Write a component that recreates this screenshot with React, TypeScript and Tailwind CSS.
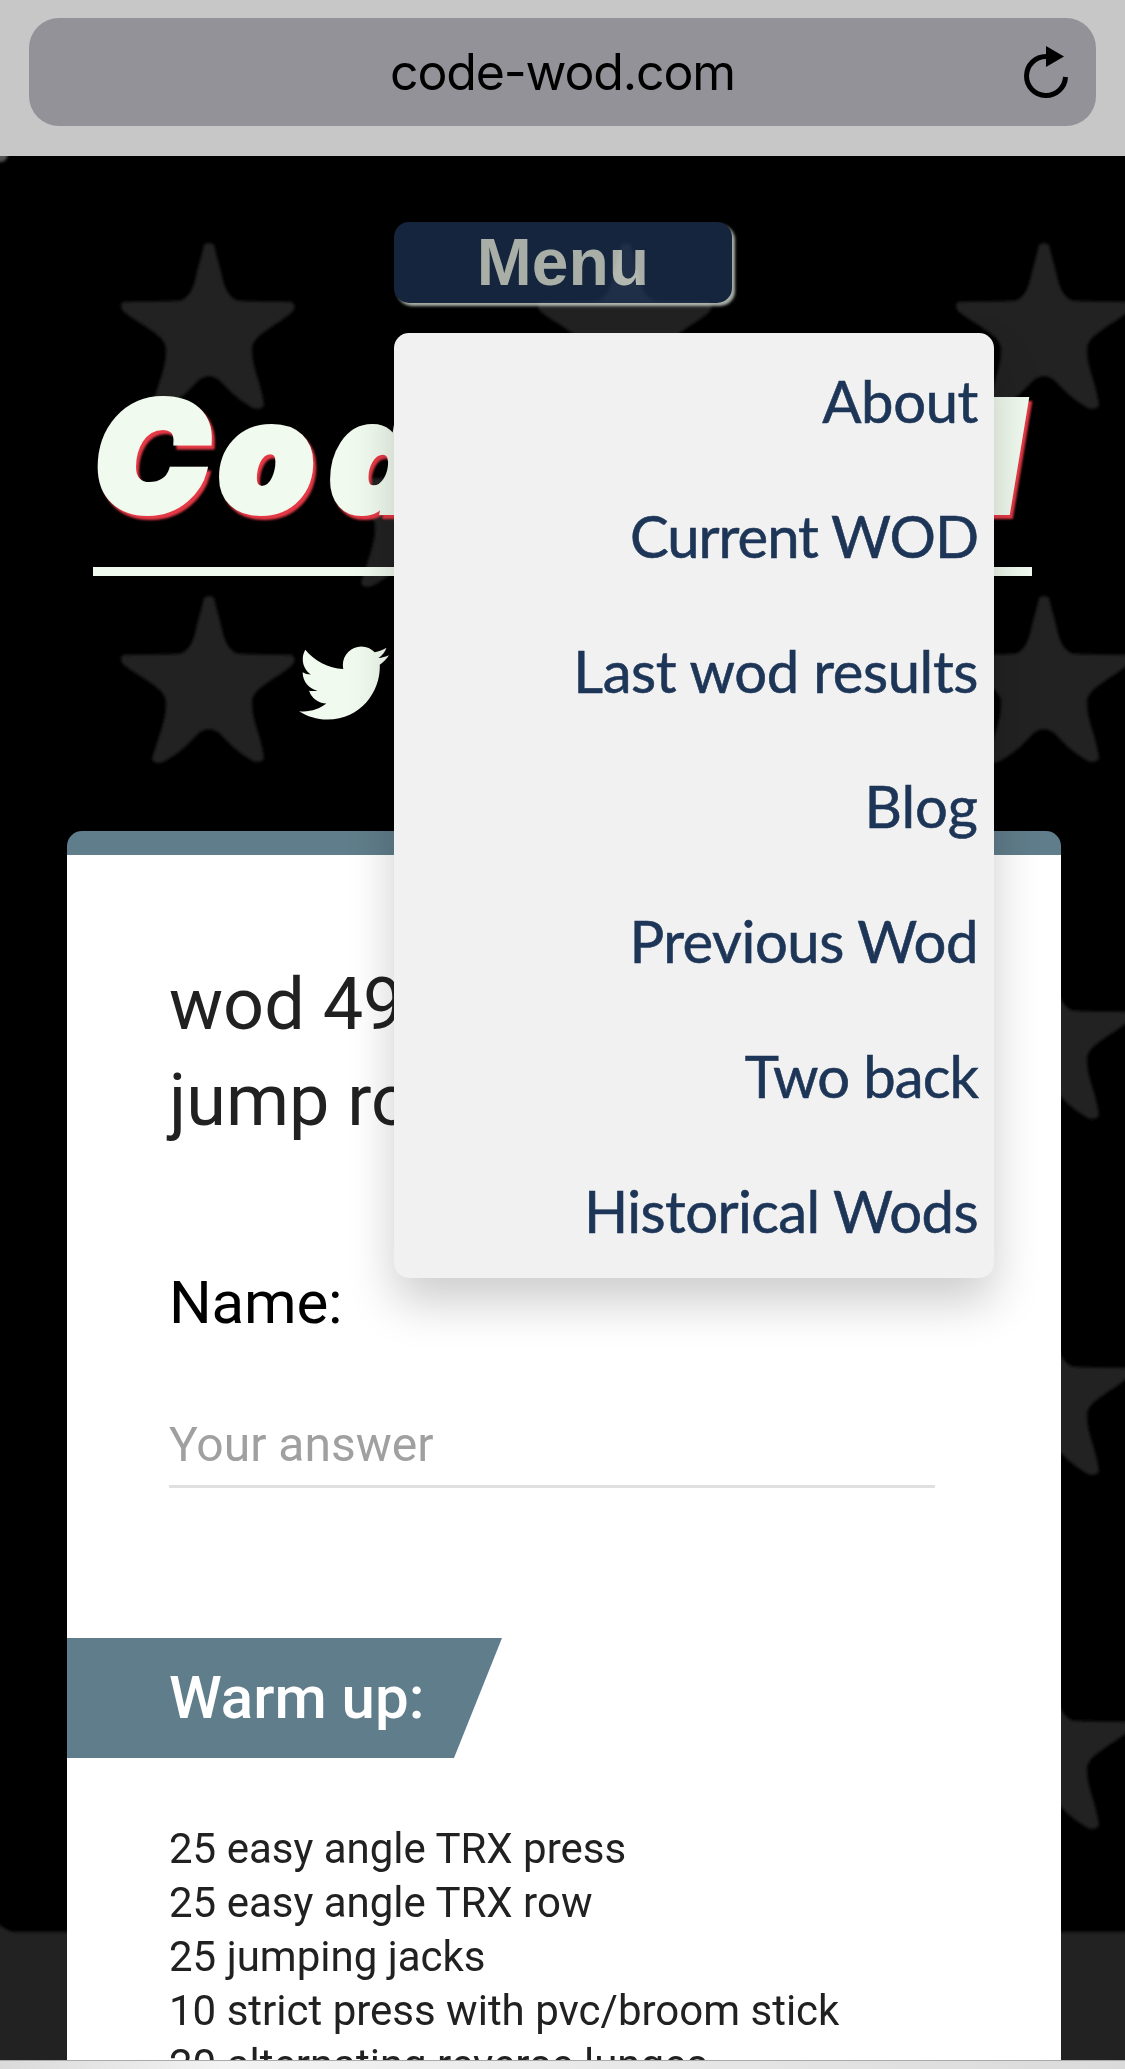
import { FaTwitter } from "react-icons/fa";

const menuItems = [
  { label: "About", tracking: "tracking-[-0.4px]" },
  { label: "Current WOD", tracking: "tracking-[-1px]" },
  { label: "Last wod results", tracking: "tracking-[-0.4px]" },
  { label: "Blog", tracking: "tracking-[0px]" },
  { label: "Previous Wod", tracking: "tracking-[-0.5px]" },
  { label: "Two back", tracking: "tracking-[-0.9px]" },
  { label: "Historical Wods", tracking: "tracking-[-0.6px]" },
];

const warmUp = [
  "25 easy angle TRX press",
  "25 easy angle TRX row",
  "25 jumping jacks",
  "10 strict press with pvc/broom stick",
  "20 alternating reverse lunges",
];

// Tip positions of the flag stars, in page pixels
const stars: [number, number][] = [
  [209, 244], [626, 244], [1044, 244],
  [418, 421], [835, 421],
  [209, 597], [626, 597], [1044, 597],
  [1044, 954],
  [1044, 1310],
  [1044, 1664],
];

const starPath =
  "M-5 1 Q0 -3 5 1 Q8 14 12 28 Q17 56 31 57 L83 58 Q87 61 84 67 C74 78 44 90 43 104 C42 122 52 138 55 161 Q52 167 44 164 Q28 155 17 143 Q0 121 -17 143 Q-28 155 -44 164 Q-54 169 -57 162 C-50 138 -42 122 -43 104 C-44 90 -74 78 -86 67 Q-90 61 -86 58 L-31 57 Q-17 56 -12 28 Q-8 14 -5 1Z";

function StarBackground() {
  return (
    <svg className="absolute inset-0" width="1125" height="2069" viewBox="0 0 1125 2069">
      <defs>
        <filter id="soft" x="-5%" y="-5%" width="110%" height="110%">
          <feGaussianBlur stdDeviation="1.5" />
        </filter>
      </defs>
      <rect width="1125" height="2069" fill="#000" />
      <g fill="#222" filter="url(#soft)">
        {stars.map(([x, y]) => (
          <path key={`${x}-${y}`} d={starPath} transform={`translate(${x} ${y})`} />
        ))}
        <path d="M-10 1916 Q4 1931 14 1932 H1140 V2080 H-10Z" />
        <circle cx="0" cy="154" r="8" fill="#555" />
      </g>
    </svg>
  );
}

function AddressBar() {
  return (
    <div className="relative h-[156px] shrink-0 bg-[#c7c7c7] px-[29px] pt-[18px]">
      <div className="flex h-[108px] items-center justify-center rounded-[30px] bg-[#929298]">
        <span className="font-['Inter',sans-serif] text-[50px] leading-[108px] tracking-[-1.15px] text-black">code-wod.com</span>
      </div>
      <svg className="absolute top-[44px] right-[52px]" width="52" height="58" viewBox="0 0 52 58">
        <path d="M25 12.5 A19.5 19.5 0 1 0 44.5 33" fill="none" stroke="#000" strokeWidth="5" />
        <path d="M25 2 L43 12.5 L25 23Z" fill="#000" />
      </svg>
    </div>
  );
}

function MenuPanel() {
  return (
    <ul className="absolute top-[111px] left-0 z-20 w-[600px] rounded-[15px] bg-[#f1f1f1] font-['Lato',sans-serif] text-[58px] text-[#1d3557] shadow-[0_24px_48px_rgba(0,0,0,0.2)] [-webkit-text-stroke:0.6px_#1d3557]">
      {menuItems.map((item) => (
        <li key={item.label} className="h-[135px] pr-[16px] text-right leading-[135px]">
          <a className={item.tracking}>{item.label}</a>
        </li>
      ))}
    </ul>
  );
}

function WorkoutCard() {
  return (
    <section className="mt-[103px] ml-[67px] h-[1300px] w-[994px] shrink-0 overflow-hidden rounded-t-[15px] border-t-[24px] border-[#607d8b] bg-white font-['Roboto',sans-serif] text-[#212121]">
      <h2 className="ml-[102px] pt-[102px] text-[72px] leading-[96px]">
        wod 49:
        <br />
        jump rope
      </h2>
      <div className="mt-[114px] ml-[102px] text-[60px] leading-[80px] tracking-[-0.2px] text-black">Name:</div>
      <div className="mt-[72px] ml-[102px] h-[73px] w-[766px] border-b-[3px] border-[#e0e0e0] text-[48px] leading-[60px] text-[#a0a0a0]">
        Your answer
      </div>
      <div className="mt-[150px] h-[120px] w-[435px] bg-[#607d8b] pl-[102px] text-[60px] leading-[120px] font-medium text-white [clip-path:polygon(0_0,100%_0,387px_100%,0_100%)]">
        Warm up:
      </div>
      <ul className="mt-[64px] ml-[102px] text-[42px] leading-[54px]">
        {warmUp.map((line) => (
          <li key={line}>{line}</li>
        ))}
      </ul>
    </section>
  );
}

export default function App() {
  return (
    <div className="relative h-[2069px] w-[1125px] overflow-hidden bg-black">
      <StarBackground />
      <div className="relative flex h-full flex-col">
        <AddressBar />
        <div className="relative z-20 mt-[66px] ml-[394px] h-[81px] w-[338px] shrink-0">
          <button className="block h-[81px] w-[338px] rounded-[15px] bg-[#1d3557] text-center font-['Liberation_Sans',sans-serif] text-[66px] leading-[81px] font-bold text-[#f1faee] opacity-70 shadow-[3px_3px_3px_#f1faee]">
            Menu
          </button>
          <MenuPanel />
        </div>
        <h1 className="mt-[73px] ml-[93px] h-[200px] w-[939px] shrink-0 border-b-[9px] border-[#f1faee] pl-[2px] font-['Inter',sans-serif] text-[151px] leading-[160px] font-black tracking-[16.5px] whitespace-nowrap text-[#f1faee] italic [-webkit-text-stroke:8px_#f1faee]">
          <span className="block drop-shadow-[3px_4px_1px_#e63946]">
            <span className="tracking-[11px]">C</span>
            <span className="tracking-[17px]">o</span>de-Wod
          </span>
        </h1>
        <FaTwitter className="mt-[62px] ml-[299px] size-[90px] shrink-0 text-[#f1faee]" />
        <WorkoutCard />
      </div>
      <footer className="absolute bottom-0 left-0 z-30 h-[9px] w-full border-t border-[#aaaaaa] bg-linear-to-r from-[#dadada] via-[#f3f3f3] via-20% to-[#dadada]" />
    </div>
  );
}
